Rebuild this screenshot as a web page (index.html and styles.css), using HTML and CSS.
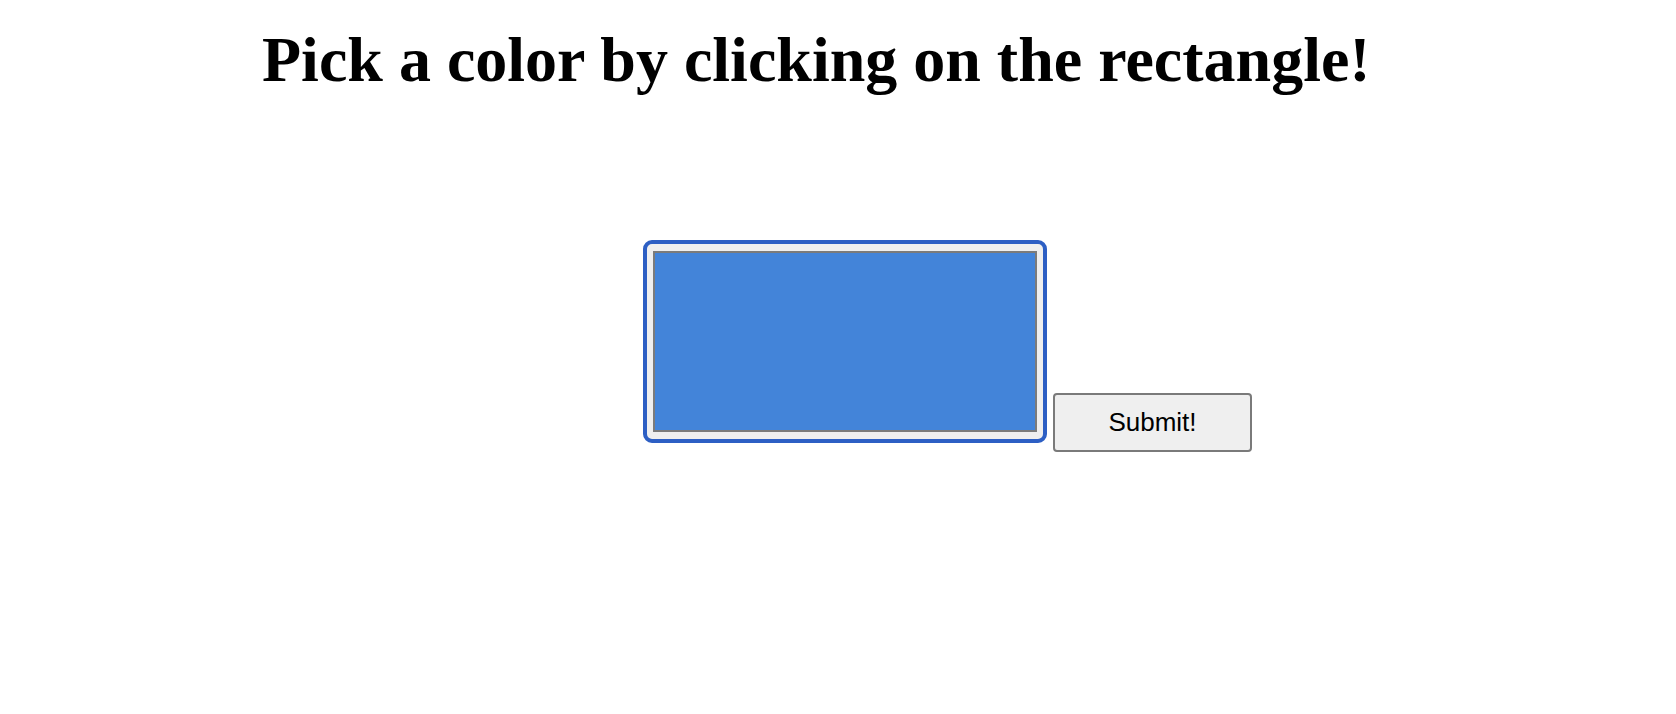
FILE: index.html
```html
<!DOCTYPE html>
<html>
<head>
<meta charset="utf-8">
<link rel="stylesheet" href="styles.css">
</head>
<body>
<h1 class="title">Pick a color by clicking on the rectangle!</h1>
<div class="row">
  <div class="picker">
    <div class="swatch"></div>
  </div>
  <button class="submit">Submit!</button>
</div>
</body>
</html>
```

FILE: styles.css
```css
html, body {
  margin: 0;
  padding: 0;
  background: #ffffff;
}
body {
  font-family: "Liberation Serif", "Times New Roman", serif;
  color: #000;
}
.title {
  margin: 0;
  padding-top: 24px;
  padding-left: 262px;
  font-size: 64px;
  font-weight: bold;
  line-height: 71px;
  white-space: nowrap;
}
.row {
  display: flex;
  align-items: flex-start;
  margin-top: 145px;
  padding-left: 643px;
}
.picker {
  box-sizing: border-box;
  width: 404px;
  height: 203px;
  border: 4px solid #2d5fc4;
  border-radius: 9px;
  background: #efefef;
  padding: 7px 6px;
  display: flex;
}
.swatch {
  flex: 1;
  box-sizing: border-box;
  border: 2px solid #7b7b7b;
  background: #4384d9;
}
.submit {
  box-sizing: border-box;
  margin-left: 6px;
  margin-top: 153px;
  width: 199px;
  height: 59px;
  border: 2px solid #7a7a7a;
  border-radius: 4px;
  background: #efefef;
  font-family: "Liberation Sans", Arial, sans-serif;
  font-size: 26px;
  color: #000;
  padding: 0;
}
```
